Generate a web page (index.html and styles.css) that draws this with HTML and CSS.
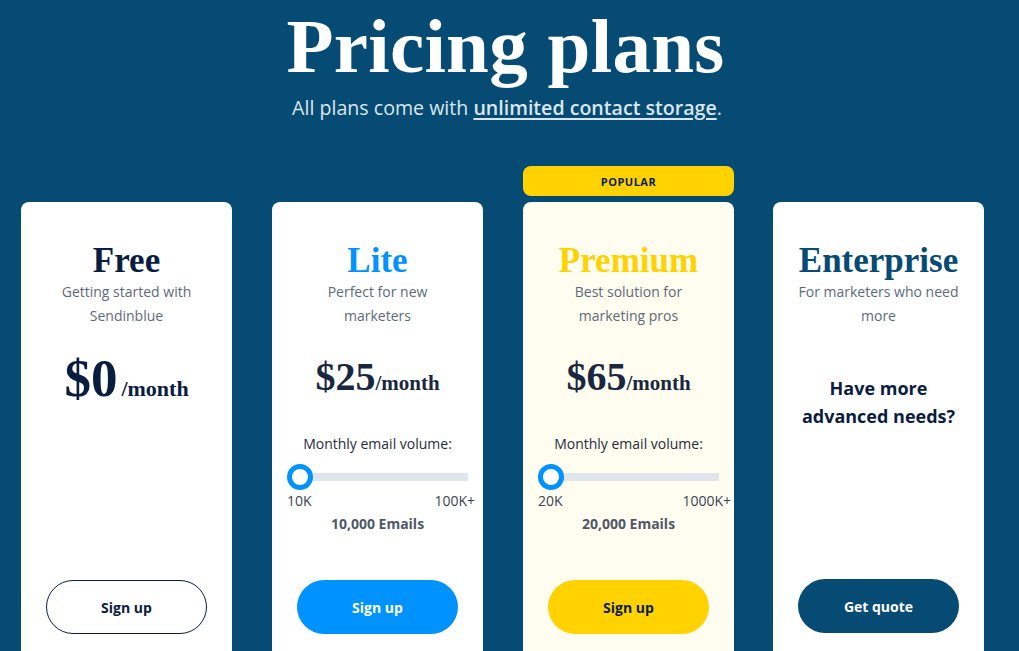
FILE: index.html
```html
<!DOCTYPE html>
<html lang="en">
<head>
<meta charset="utf-8">
<title>Pricing plans</title>
<link rel="stylesheet" href="styles.css">
</head>
<body>
<header class="hero">
  <h1 class="hero-title">Pricing plans</h1>
  <p class="hero-sub">All plans come with <a href="#" class="hero-link">unlimited contact storage</a>.</p>
</header>
<main class="plans">
  <div class="plan-col">
    <div class="tag-slot"></div>
    <section class="card">
      <h2 class="plan-name name-free">Free</h2>
      <p class="plan-desc">Getting started with Sendinblue</p>
      <div class="price price-big"><span class="amount">$0</span> <span class="per">/month</span></div>
      <a href="#" class="btn btn-outline">Sign up</a>
    </section>
  </div>
  <div class="plan-col">
    <div class="tag-slot"></div>
    <section class="card">
      <h2 class="plan-name name-lite">Lite</h2>
      <p class="plan-desc">Perfect for new marketers</p>
      <div class="price"><span class="amount">$25</span><span class="per">/month</span></div>
      <p class="vol-label">Monthly email volume:</p>
      <div class="slider">
        <div class="track"><span class="thumb"></span></div>
        <div class="ticks"><span>10K</span><span class="tick-end">100K+</span></div>
      </div>
      <p class="vol-value">10,000 Emails</p>
      <a href="#" class="btn btn-blue">Sign up</a>
    </section>
  </div>
  <div class="plan-col">
    <div class="tag-slot"><div class="tag">POPULAR</div></div>
    <section class="card card-premium">
      <h2 class="plan-name name-premium">Premium</h2>
      <p class="plan-desc">Best solution for marketing pros</p>
      <div class="price"><span class="amount">$65</span><span class="per">/month</span></div>
      <p class="vol-label">Monthly email volume:</p>
      <div class="slider">
        <div class="track"><span class="thumb"></span></div>
        <div class="ticks"><span>20K</span><span class="tick-end tick-wide">1000K+</span></div>
      </div>
      <p class="vol-value">20,000 Emails</p>
      <a href="#" class="btn btn-yellow">Sign up</a>
    </section>
  </div>
  <div class="plan-col plan-col-last">
    <div class="tag-slot"></div>
    <section class="card">
      <h2 class="plan-name name-ent">Enterprise</h2>
      <p class="plan-desc">For marketers who need more</p>
      <p class="ent-note">Have more advanced needs?</p>
      <a href="#" class="btn btn-navy">Get quote</a>
    </section>
  </div>
</main>
</body>
</html>
```
FILE: styles.css
```css
* { box-sizing: border-box; }
html, body { margin: 0; padding: 0; }
body {
  background: #064b73;
  font-family: "Open Sans", "Liberation Sans", sans-serif;
  color: #0b1d3f;
  height: 651px;
  overflow: hidden;
}
.hero { text-align: center; padding-top: 8px; }
.hero-title {
  margin: 0 0 0 -8px;
  font-family: "Liberation Serif", serif;
  font-weight: 700;
  font-size: 77px;
  line-height: 76px;
  color: #ffffff;
  letter-spacing: 0.3px;
}
.hero-sub {
  margin: 10px 0 0 -5px;
  font-size: 19.6px;
  line-height: 28px;
  color: #dce6ee;
}
.hero-link {
  color: #dce6ee;
  font-weight: 600;
  text-decoration: underline;
  text-underline-offset: 3px;
  text-decoration-thickness: 2px;
}
.plans {
  display: flex;
  gap: 40px;
  padding-left: 21px;
  margin-top: 44px;
}
.plan-col { width: 211px; display: flex; flex-direction: column; }
.plan-col-last { margin-left: -1px; }
.tag-slot { height: 36px; }
.tag {
  height: 30px;
  background: #ffd200;
  border-radius: 8px;
  font-size: 11px;
  font-weight: 700;
  letter-spacing: 0.5px;
  line-height: 31px;
  text-align: center;
  color: #0b1d3f;
}
.card {
  height: 480px;
  background: #ffffff;
  border-radius: 8px;
  padding: 38px 24px 48px;
  display: flex;
  flex-direction: column;
  align-items: stretch;
  text-align: center;
}
.card-premium { background: #fffdf0; }
.plan-name {
  margin: 0 -10px;
  font-family: "Liberation Serif", serif;
  font-weight: 700;
  font-size: 35px;
  line-height: 42px;
}
.name-free { color: #0b1d3f; }
.name-lite { color: #0092ff; }
.name-premium { color: #ffd200; }
.name-ent { color: #064b73; }
.plan-desc {
  margin: -2px 0 0;
  height: 48px;
  font-size: 14px;
  line-height: 24px;
  color: #5d6a79;
}
.price {
  margin: 27px -10px 0;
  height: 60px;
  line-height: 60px;
  font-family: "Liberation Serif", serif;
  font-weight: 700;
  color: #1a2740;
  white-space: nowrap;
}
.price .amount { font-size: 40px; line-height: 1; }
.price .per { font-size: 21px; line-height: 1; }
.price-big { margin-top: 24px; }
.price-big .amount { font-size: 53px; color: #0b1d3f; }
.price-big .per { font-size: 22px; color: #0b1d3f; }
.vol-label {
  margin: 19px -10px 0;
  font-size: 14px;
  line-height: 20px;
  color: #1f2d3d;
}
.slider { margin: 10px -9px 0; }
.track {
  height: 26px;
  display: flex;
  align-items: center;
  background: linear-gradient(#dfe5ec, #dfe5ec) no-repeat left 13px center / calc(100% - 13px) 8px;
}
.thumb {
  width: 26px;
  height: 26px;
  border-radius: 50%;
  background: #ffffff;
  border: 5px solid #0092ff;
}
.ticks {
  display: flex;
  justify-content: space-between;
  margin-top: 1px;
  margin-right: -7px;
  font-size: 14px;
  line-height: 20px;
  color: #3a4450;
}
.tick-wide { margin-right: -5px; }
.vol-value {
  margin: 3px 0 0;
  font-size: 14px;
  line-height: 20px;
  font-weight: 700;
  color: #4f5866;
}
.ent-note {
  margin: 46px auto 0;
  max-width: 170px;
  font-size: 18px;
  line-height: 28px;
  font-weight: 700;
  color: #0b1d3f;
}
.btn {
  margin: auto 1px 0;
  height: 54px;
  border-radius: 27px;
  display: flex;
  align-items: center;
  justify-content: center;
  font-size: 14px;
  font-weight: 700;
  text-decoration: none;
}
.btn-outline { border: 1px solid #0b1d3f; color: #0b1d3f; background: #ffffff; }
.btn-blue { background: #0092ff; color: #ffffff; }
.btn-yellow { background: #ffd200; color: #0b1d3f; }
.btn-navy { background: #064b73; color: #ffffff; margin-bottom: 1px; }
```
